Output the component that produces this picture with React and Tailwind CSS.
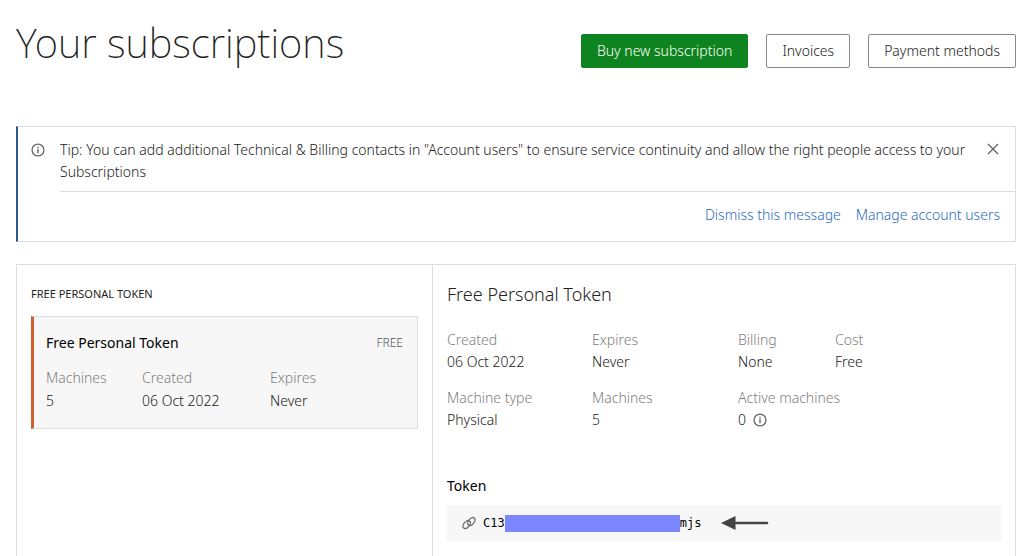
import React from 'react';

const subscription = {
  name: 'Free Personal Token',
  machines: '5',
  created: '06 Oct 2022',
  expires: 'Never',
};

const InfoIcon = () => (
  <svg viewBox="0 0 16 16" className="w-[14px] h-[14px] shrink-0" fill="none" stroke="#666" aria-hidden="true">
    <circle cx="8" cy="8" r="6.8" strokeWidth="1.5" />
    <path d="M8 7v4.6" strokeWidth="1.7" />
    <path d="M8 4.3v1.7" strokeWidth="1.7" />
  </svg>
);

const CloseIcon = () => (
  <svg viewBox="0 0 12 12" className="w-3 h-3" fill="none" stroke="#666" strokeWidth="1.4" aria-hidden="true">
    <path d="M1 1l10 10M11 1L1 11" />
  </svg>
);

// two interlocking chain loops, tilted to the right
const LinkIcon = () => (
  <svg viewBox="0 0 24 24" className="w-[14px] h-[14px] shrink-0" fill="none" stroke="#666" strokeWidth="2" aria-hidden="true">
    <ellipse cx="8" cy="14.6" rx="7.8" ry="4.8" transform="rotate(-50 8 14.6)" />
    <ellipse cx="16" cy="9.4" rx="7.8" ry="4.8" transform="rotate(-50 16 9.4)" />
  </svg>
);

const Arrow = () => (
  <svg viewBox="0 0 48 14" className="w-12 h-[14px] shrink-0" aria-hidden="true">
    <path d="M0 7L14.5 0v14z" fill="#444" />
    <path d="M14 7h32" stroke="#444" strokeWidth="2.6" strokeLinecap="round" />
  </svg>
);

function Field({ label, children, className = '' }) {
  return (
    <div className={className}>
      <dt className="text-[#808080]">{label}</dt>
      <dd className="text-[#222]">{children}</dd>
    </div>
  );
}

function App() {
  return (
    <div className="min-h-screen flex flex-col bg-white pl-4 pr-2 font-['Noto_Sans',sans-serif] font-light text-[14px] leading-[22px] text-[#222]">
      <header className="flex items-start justify-between">
        <h1 className="pt-4 text-[40px] leading-[54px] font-extralight text-[#222]">Your subscriptions</h1>
        <div className="flex gap-[18px] pt-[34px]">
          <button className="h-[34px] px-[15px] rounded-xs bg-[#0e8420] border border-[#0e8420] text-white">Buy new subscription</button>
          <button className="h-[34px] px-[15px] rounded-xs border border-[#888]">Invoices</button>
          <button className="h-[34px] px-[15px] rounded-xs border border-[#888]">Payment methods</button>
        </div>
      </header>

      <section className="mt-14 border border-[#ddd] border-l-2 border-l-[#24598f]">
        <div className="flex items-start pl-[13px] pr-4 pt-3">
          <div className="pt-1"><InfoIcon /></div>
          <p className="ml-[15px] flex-1">
            Tip: You can add additional Technical &amp; Billing contacts in "Account users" to ensure service continuity and allow the right people access to your Subscriptions
          </p>
          <button aria-label="Close" className="pt-1 ml-3"><CloseIcon /></button>
        </div>
        <div className="ml-[42px] mt-2 border-t border-[#ddd] pt-3 pb-[15px] pr-[15px] flex justify-end gap-[15px] text-[#2a6cc0]">
          <a href="#dismiss">Dismiss this message</a>
          <a href="#users">Manage account users</a>
        </div>
      </section>

      <main className="mt-[22px] flex-1 flex border border-b-0 border-[#ddd]">
        <section className="w-[416px] shrink-0 border-r border-[#ddd] px-[14px] pt-5">
          <h2 className="text-[11px] leading-[18px] font-normal uppercase">{subscription.name}</h2>
          <div className="mt-[13px] border border-[#ddd] border-l-[3px] border-l-[#d0602f] bg-[#f7f7f7] pl-3 pr-[14px] pt-[15px] pb-4">
            <div className="flex justify-between items-center">
              <h3 className="font-normal text-black">{subscription.name}</h3>
              <span className="text-[12px] text-[#555]">FREE</span>
            </div>
            <dl className="mt-3 flex leading-[23px]">
              <Field label="Machines" className="w-24">{subscription.machines}</Field>
              <Field label="Created" className="w-32">{subscription.created}</Field>
              <Field label="Expires">{subscription.expires}</Field>
            </dl>
          </div>
        </section>

        <section className="flex-1 px-[14px] pt-4">
          <h2 className="text-[18px] leading-[26px] text-[#222]">{subscription.name}</h2>
          <dl className="mt-[22px] grid grid-cols-[145px_146px_97px_1fr] gap-y-[14px]">
            <Field label="Created">{subscription.created}</Field>
            <Field label="Expires">{subscription.expires}</Field>
            <Field label="Billing">None</Field>
            <Field label="Cost">Free</Field>
            <Field label="Machine type">Physical</Field>
            <Field label="Machines">{subscription.machines}</Field>
            <Field label="Active machines" className="col-span-2">
              <span className="flex items-center gap-[7px]">0 <InfoIcon /></span>
            </Field>
          </dl>
          <h3 className="mt-11 font-normal text-black">Token</h3>
          <div className="mt-2 h-9 flex items-center bg-[#f7f7f7] px-[15px] font-['DejaVu_Sans_Mono',monospace] text-[12px] font-normal text-black">
            <LinkIcon />
            <code className="ml-[7px] flex items-center font-['DejaVu_Sans_Mono',monospace]">
              C13<span className="w-[175px] h-[17px] bg-[#7b86ff]" />mjs
            </code>
            <span className="ml-5"><Arrow /></span>
          </div>
        </section>
      </main>
    </div>
  );
}

export default App;
